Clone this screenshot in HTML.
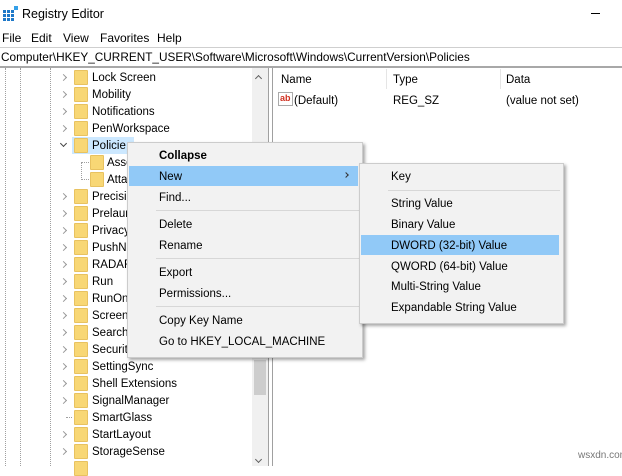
<!DOCTYPE html>
<html><head><meta charset="utf-8"><style>
*{margin:0;padding:0;box-sizing:border-box}
body{width:622px;height:466px;background:#fff;font-family:"Liberation Sans",sans-serif;font-size:11.5px;color:#000;position:relative;overflow:hidden}
.a{position:absolute;white-space:nowrap}
.t{position:absolute;left:92px;white-space:nowrap;line-height:17px;margin-top:1px}
.f{position:absolute;left:74px;width:14px;height:15px;background:#f8d775;border:1px solid #e8c260;border-radius:1px}
.c{position:absolute;left:61px;width:5px;height:5px;border-right:1px solid #999;border-bottom:1px solid #999;transform:rotate(-45deg)}
.vl{position:absolute;top:68px;height:398px;border-left:1px dotted #a0a0a0}
.m{position:absolute;left:159px;line-height:21px;margin-top:1px}
.s{position:absolute;left:391px;line-height:21px;margin-top:1px}
.sep{position:absolute;height:1px;background:#d7d7d7}
</style></head><body>
<svg class="a" style="left:3px;top:6px" width="16" height="16" viewBox="0 0 16 16">
<g fill="#1e78c8"><rect x="0" y="4" width="3" height="3"/><rect x="4" y="4" width="3" height="3"/><rect x="8" y="4" width="3" height="3"/><rect x="0" y="8" width="3" height="3"/><rect x="4" y="8" width="3" height="3"/><rect x="8" y="8" width="3" height="3"/><rect x="0" y="12" width="3" height="3"/><rect x="4" y="12" width="3" height="3"/><rect x="8" y="12" width="3" height="3"/></g>
<rect x="11" y="0" width="4" height="4" fill="#35a0e8"/></svg>
<div class="a" style="left:22px;top:7px;font-size:12.5px">Registry Editor</div>
<div class="a" style="left:591px;top:13px;width:9px;height:1px;background:#000"></div>
<div class="a" style="left:2px;top:31px;font-size:12px">File</div>
<div class="a" style="left:31px;top:31px;font-size:12px">Edit</div>
<div class="a" style="left:63px;top:31px;font-size:12px">View</div>
<div class="a" style="left:100px;top:31px;font-size:12px">Favorites</div>
<div class="a" style="left:157px;top:31px;font-size:12px">Help</div>
<div class="a" style="left:0;top:47px;width:622px;height:1px;background:#cfcfcf"></div>
<div class="a" style="left:0;top:66px;width:622px;height:2px;background:#a8a8a8"></div>
<div class="a" style="left:1px;top:50px;font-size:11.8px">Computer\HKEY_CURRENT_USER\Software\Microsoft\Windows\CurrentVersion\Policies</div>
<div class="vl" style="left:5px"></div><div class="vl" style="left:20px"></div><div class="vl" style="left:50px"></div>
<div class="a" style="left:81px;top:162px;height:18px;border-left:1px dotted #a0a0a0"></div>
<div class="a" style="left:81px;top:162px;width:8px;border-top:1px dotted #a0a0a0"></div>
<div class="a" style="left:81px;top:179px;width:8px;border-top:1px dotted #a0a0a0"></div>
<div class="a" style="left:66px;top:417px;width:6px;border-top:1px dotted #a0a0a0"></div>
<div class="a" style="left:72px;top:137px;width:62px;height:17px;background:#cce8ff"></div>
<div class="c" style="top:75px"></div><div class="f" style="top:70px"></div><div class="t" style="top:69px">Lock Screen</div>
<div class="c" style="top:92px"></div><div class="f" style="top:87px"></div><div class="t" style="top:86px">Mobility</div>
<div class="c" style="top:109px"></div><div class="f" style="top:104px"></div><div class="t" style="top:103px">Notifications</div>
<div class="c" style="top:126px"></div><div class="f" style="top:121px"></div><div class="t" style="top:120px">PenWorkspace</div>
<div class="c" style="top:141px;transform:rotate(45deg);border-color:#444"></div><div class="f" style="top:138px"></div><div class="t" style="top:137px">Policie</div>
<div class="f" style="top:155px;left:90px"></div><div class="t" style="top:154px;left:107px">Asso</div>
<div class="f" style="top:172px;left:90px"></div><div class="t" style="top:171px;left:107px">Atta</div>
<div class="c" style="top:194px"></div><div class="f" style="top:189px"></div><div class="t" style="top:188px">Precisio</div>
<div class="c" style="top:211px"></div><div class="f" style="top:206px"></div><div class="t" style="top:205px">Prelaun</div>
<div class="c" style="top:228px"></div><div class="f" style="top:223px"></div><div class="t" style="top:222px">Privacy</div>
<div class="c" style="top:245px"></div><div class="f" style="top:240px"></div><div class="t" style="top:239px">PushN</div>
<div class="c" style="top:262px"></div><div class="f" style="top:257px"></div><div class="t" style="top:256px">RADAR</div>
<div class="c" style="top:279px"></div><div class="f" style="top:274px"></div><div class="t" style="top:273px">Run</div>
<div class="c" style="top:296px"></div><div class="f" style="top:291px"></div><div class="t" style="top:290px">RunOn</div>
<div class="c" style="top:313px"></div><div class="f" style="top:308px"></div><div class="t" style="top:307px">Screen</div>
<div class="c" style="top:330px"></div><div class="f" style="top:325px"></div><div class="t" style="top:324px">Search</div>
<div class="c" style="top:347px"></div><div class="f" style="top:342px"></div><div class="t" style="top:341px">Securit</div>
<div class="c" style="top:364px"></div><div class="f" style="top:359px"></div><div class="t" style="top:358px">SettingSync</div>
<div class="c" style="top:381px"></div><div class="f" style="top:376px"></div><div class="t" style="top:375px">Shell Extensions</div>
<div class="c" style="top:398px"></div><div class="f" style="top:393px"></div><div class="t" style="top:392px">SignalManager</div>
<div class="f" style="top:410px"></div><div class="t" style="top:409px">SmartGlass</div>
<div class="c" style="top:432px"></div><div class="f" style="top:427px"></div><div class="t" style="top:426px">StartLayout</div>
<div class="c" style="top:449px"></div><div class="f" style="top:444px"></div><div class="t" style="top:443px">StorageSense</div>
<div class="f" style="top:461px"></div>
<div class="a" style="left:252px;top:68px;width:16px;height:398px;background:#f0f0f0"></div>
<div class="a" style="left:254px;top:360px;width:12px;height:35px;background:#cdcdcd"></div>
<div class="a" style="left:256px;top:76px;width:5px;height:5px;border-left:1.5px solid #606060;border-top:1.5px solid #606060;transform:rotate(45deg)"></div>
<div class="a" style="left:256px;top:457px;width:5px;height:5px;border-right:1.5px solid #606060;border-bottom:1.5px solid #606060;transform:rotate(45deg)"></div>
<div class="a" style="left:268px;top:68px;width:1px;height:398px;background:#a0a0a0"></div>
<div class="a" style="left:272px;top:68px;width:1px;height:398px;background:#a0a0a0"></div>
<div class="a" style="left:386px;top:69px;width:1px;height:20px;background:#e5e5e5"></div>
<div class="a" style="left:500px;top:69px;width:1px;height:20px;background:#e5e5e5"></div>
<div class="a" style="left:281px;top:74px">Name</div>
<div class="a" style="left:393px;top:74px">Type</div>
<div class="a" style="left:506px;top:74px">Data</div>
<div class="a" style="left:278px;top:92px;width:15px;height:14px;border:1px solid #aaa;background:#fff;color:#d03020;font-size:9px;font-weight:bold;line-height:10px;padding-left:1px">ab</div>
<div class="a" style="left:294px;top:95px">(Default)</div>
<div class="a" style="left:393px;top:95px">REG_SZ</div>
<div class="a" style="left:506px;top:95px">(value not set)</div>
<div class="a" style="left:127px;top:142px;width:236px;height:216px;background:#f2f2f2;border:1px solid #cccccc;box-shadow:2px 2px 3px rgba(0,0,0,.35)"></div>
<div class="a" style="left:129px;top:166px;width:229px;height:20px;background:#91c9f7"></div>
<div class="m" style="top:145px;font-weight:bold">Collapse</div>
<div class="m" style="top:166px">New</div>
<div class="a" style="left:344px;top:173px;width:4px;height:4px;border-right:1px solid #333;border-top:1px solid #333;transform:rotate(45deg)"></div>
<div class="m" style="top:187px">Find...</div>
<div class="sep" style="left:156px;top:210px;width:204px"></div>
<div class="m" style="top:214px">Delete</div>
<div class="m" style="top:235px">Rename</div>
<div class="sep" style="left:156px;top:258px;width:204px"></div>
<div class="m" style="top:262px">Export</div>
<div class="m" style="top:283px">Permissions...</div>
<div class="sep" style="left:156px;top:306px;width:204px"></div>
<div class="m" style="top:310px">Copy Key Name</div>
<div class="m" style="top:331px">Go to HKEY_LOCAL_MACHINE</div>
<div class="a" style="left:359px;top:163px;width:205px;height:161px;background:#f2f2f2;border:1px solid #cccccc;box-shadow:2px 2px 3px rgba(0,0,0,.35)"></div>
<div class="a" style="left:361px;top:235px;width:198px;height:20px;background:#91c9f7"></div>
<div class="s" style="top:166px">Key</div>
<div class="sep" style="left:388px;top:190px;width:172px"></div>
<div class="s" style="top:193px">String Value</div>
<div class="s" style="top:214px">Binary Value</div>
<div class="s" style="top:235px">DWORD (32-bit) Value</div>
<div class="s" style="top:256px">QWORD (64-bit) Value</div>
<div class="s" style="top:276px">Multi-String Value</div>
<div class="s" style="top:297px">Expandable String Value</div>
<div class="a" style="left:578px;top:450px;color:#777;font-size:10px">wsxdn.com</div>
</body></html>
